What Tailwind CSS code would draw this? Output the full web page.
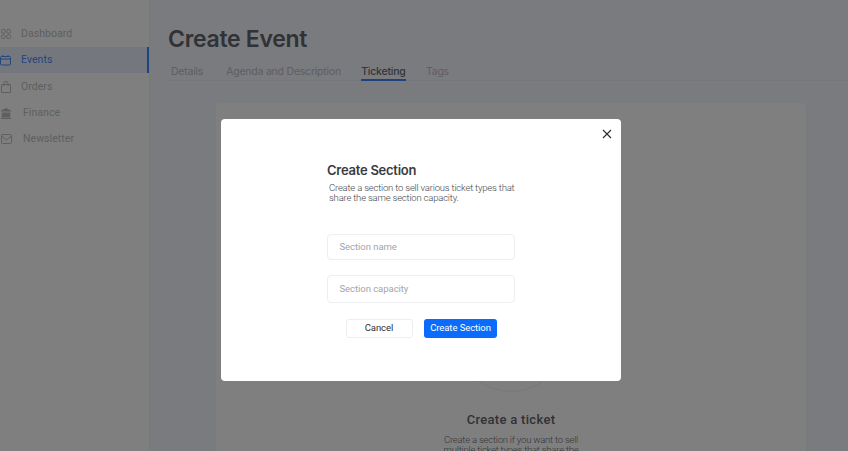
<!DOCTYPE html>
<html>
<head>
<meta charset="utf-8">
<script src="https://cdn.jsdelivr.net/npm/@tailwindcss/browser@4"></script>
</head>
<body class="overflow-hidden">
<div class="relative flex h-[451px] w-[848px] overflow-hidden bg-white font-['Inter',sans-serif]">
  <aside class="h-full w-[150px] shrink-0 border-r border-[#f0f1f5] bg-white pt-[20px] font-['Roboto',sans-serif] text-[10.5px] tracking-[0.05px] text-[#bdbec2]">
    <div class="flex h-[27px] items-center pt-[1px]">
      <svg class="ml-[1px] mr-[10px] h-[10px] w-[10px]" viewBox="0 0 10 10" fill="none" stroke="#bdbec2" stroke-width="1"><rect x="0.5" y="0.5" width="3.6" height="3.6" rx="1.1"/><rect x="5.9" y="0.5" width="3.6" height="3.6" rx="1.1"/><rect x="0.5" y="5.9" width="3.6" height="3.6" rx="1.1"/><rect x="5.9" y="5.9" width="3.6" height="3.6" rx="1.1"/></svg>
      <span>Dashboard</span>
    </div>
    <div class="flex h-[26px] items-center border-r-2 border-[#3f86ff] bg-[#e9effc] text-[#4a8cff]">
      <svg class="mr-[10px] h-[11px] w-[11px]" viewBox="0 0 11 11" fill="none" stroke="#4a8cff" stroke-width="1"><rect x="0.5" y="1.5" width="10" height="8.5" rx="1"/><path d="M0.5 4H10.5M3 0V2M8 0V2"/></svg>
      <span>Events</span>
    </div>
    <div class="flex h-[27px] items-center pt-[1px]">
      <svg class="ml-[1px] mr-[10px] h-[12px] w-[10px]" viewBox="0 0 10 12" fill="none" stroke="#bdbec2" stroke-width="1"><path d="M0.7 3.5H9.3L9.6 11.5H0.4ZM3 5V2.4A2 2 0 0 1 7 2.4V5"/></svg>
      <span>Orders</span>
    </div>
    <div class="flex h-[26px] items-center">
      <svg class="ml-[1px] mr-[12px] h-[11px] w-[10px]" viewBox="0 0 10 11" fill="#bdbec2"><path d="M5 0L10 2.6V3.6H0V2.6ZM0.8 4.4H9.2V9H0.8ZM0 9.6H10V11H0Z"/></svg>
      <span>Finance</span>
    </div>
    <div class="flex h-[26px] items-center">
      <svg class="ml-[1px] mr-[11px] h-[10px] w-[11px]" viewBox="0 0 11 10" fill="none" stroke="#bdbec2" stroke-width="1"><rect x="0.5" y="0.5" width="10" height="9" rx="1"/><path d="M0.5 2L5.5 5.8L10.5 2"/></svg>
      <span>Newsletter</span>
    </div>
  </aside>

  <main class="min-w-0 flex-1 bg-[#f5f6fe] pl-[18px]">
    <h1 class="mt-[25px] text-[23px] leading-[28px] font-semibold tracking-[-0.3px] text-[#62646b]">Create Event</h1>
    <nav class="mt-[11px] flex h-[17px] gap-[20px] border-b border-[#eceef4] text-[10.5px] tracking-[-0.22px] text-[#bcbdc4]">
      <span class="pl-[3px] pr-[3px]">Details</span>
      <span>Agenda and Description</span>
      <span class="h-[17px] w-[45px] border-b-2 border-[#3f86ff] text-center font-medium text-[#686b74]">Ticketing</span>
      <span>Tags</span>
    </nav>
    <section class="ml-[48px] mt-[22px] flex h-[400px] w-[590px] flex-col items-center rounded-[4px] bg-white font-['Roboto',sans-serif]">
      <div class="mt-[179px] h-[110px] w-[110px] shrink-0 rounded-full border border-[#f0f0f0]"></div>
      <h2 class="mt-[20px] text-[13px] leading-[16px] font-medium tracking-[0.3px] text-[#62646b]">Create a ticket</h2>
      <p class="mt-[7px] whitespace-nowrap text-center text-[9.5px] leading-[10px] font-light tracking-[-0.22px] text-[#6b6d74]">Create a section if you want to sell<br>multiple ticket types that share the</p>
    </section>
  </main>

  <div class="absolute inset-0 bg-black/50"></div>

  <div class="absolute left-[221px] top-[119px] flex h-[262px] w-[400px] flex-col items-center rounded-[4px] bg-white pt-[44px]">
    <button class="absolute right-[10px] top-[9px] mt-[1px] h-[10px] w-[10px] translate-x-[1px]">
      <svg class="block h-[10px] w-[10px]" viewBox="0 0 10 10" fill="none" stroke="#2b2b2b" stroke-width="1.1"><path d="M1 1L9 9M9 1L1 9"/></svg>
    </button>
    <div class="w-[188px]">
      <h2 class="text-[13px] leading-[15px] font-semibold tracking-[-0.25px] text-[#3a3b40]">Create Section</h2>
      <p class="ml-[2px] mt-[5px] font-['Roboto',sans-serif] text-[9.5px] leading-[10px] tracking-[-0.2px] font-light whitespace-nowrap text-[#44464c]">Create a section to sell various ticket types that<br>share the same section capacity.</p>
      <div class="mt-[31px] flex h-[26px] items-center rounded-[4px] border border-[#eceef2] pl-[11.5px] font-['Roboto',sans-serif] text-[9.5px] tracking-[-0.05px] text-[#a3a5ab]">Section name</div>
      <div class="mt-[15px] flex h-[28px] items-center rounded-[4px] border border-[#eceef2] pl-[11.5px] font-['Roboto',sans-serif] text-[9.5px] tracking-[-0.05px] text-[#a3a5ab]">Section capacity</div>
      <div class="mt-[16px] flex justify-center gap-[11px] pl-[1px] font-['Roboto',sans-serif] text-[9.5px] tracking-[-0.08px]">
        <button class="h-[19px] w-[67px] rounded-[3px] border border-[#eceef2] bg-white pr-[1px] text-[#2f3035]">Cancel</button>
        <button class="h-[19px] w-[73px] rounded-[3px] bg-[#0b6bfb] text-white">Create Section</button>
      </div>
    </div>
  </div>
</div>
</body>
</html>
